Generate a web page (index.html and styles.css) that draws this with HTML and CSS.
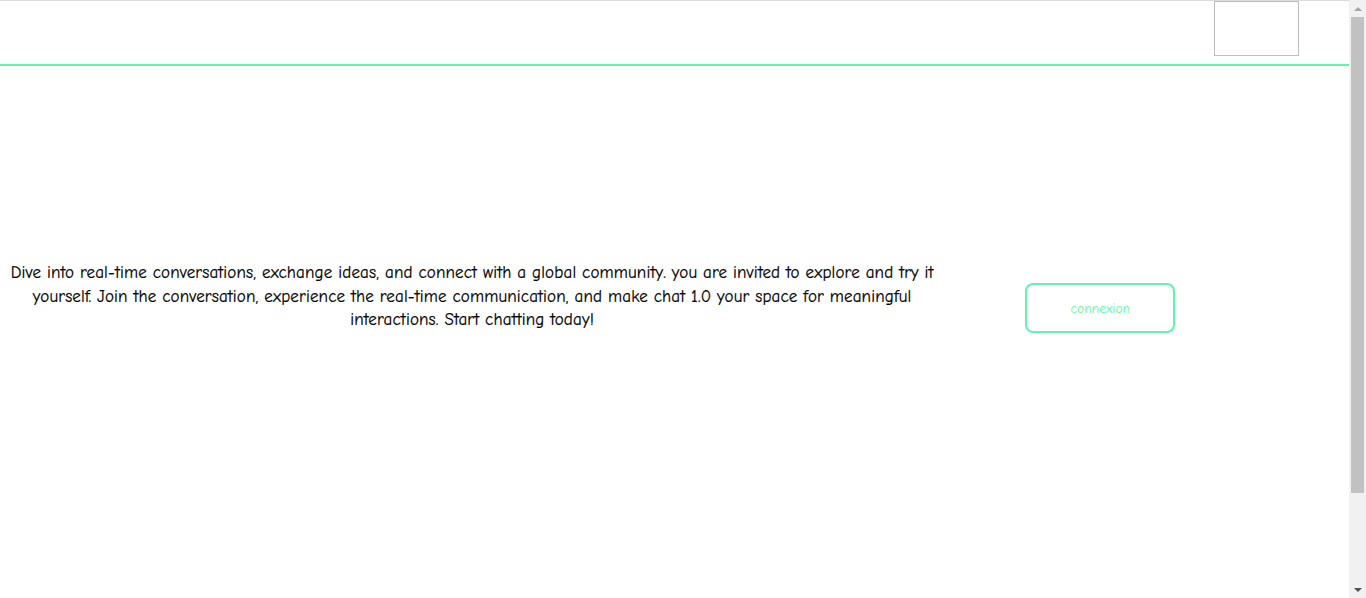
FILE: index.html
```html
<!DOCTYPE html>
<html lang="en">
<head>
<meta charset="utf-8">
<title>chat 1.0</title>
<link rel="stylesheet" href="styles.css">
</head>
<body>
<div class="page">
  <header class="topbar">
    <div class="logo-box"></div>
  </header>
  <main class="hero">
    <p class="intro">Dive into real-time conversations, exchange ideas, and connect with a global community. you are invited to explore and try it<br>yourself. Join the conversation, experience the real-time communication, and make chat 1.0 your space for meaningful<br>interactions. Start chatting today!</p>
    <div class="action">
      <button class="connect">connexion</button>
    </div>
  </main>
</div>
<div class="scrollbar" aria-hidden="true">
  <div class="sb-btn sb-up"><span class="tri-up"></span></div>
  <div class="sb-track"><div class="sb-thumb"></div></div>
  <div class="sb-btn sb-down"><span class="tri-down"></span></div>
</div>
</body>
</html>
```
FILE: styles.css
```css
html, body {
  margin: 0;
  padding: 0;
}
body {
  height: 100vh;
  overflow: hidden;
  display: flex;
  background: #ffffff;
  font-family: "Comic Sans MS", "Comic Neue", "Open Sans", sans-serif;
  color: #000;
}
.page {
  flex: 1;
  min-width: 0;
}
.topbar {
  height: 66px;
  border-top: 1px solid #dcdcdc;
  border-bottom: 2px solid #60f5aa;
  display: flex;
  justify-content: flex-end;
  align-items: flex-start;
  padding-right: 50px;
  box-sizing: border-box;
}
.logo-box {
  width: 85px;
  height: 55px;
  border: 1px solid #bdbdbd;
  box-sizing: border-box;
}
.hero {
  display: flex;
  align-items: flex-start;
  padding-top: 195px;
}
.intro {
  width: 70%;
  margin: 0;
  text-align: center;
  font-size: 17px;
  letter-spacing: 0.15px;
  line-height: 23.5px;
  -webkit-text-stroke: 0.2px #000;
}
.action {
  flex: 1;
  padding-top: 22px;
  padding-left: 81px;
}
.connect {
  width: 150px;
  height: 50px;
  background: #fff;
  border: 2px solid #60f5aa;
  border-radius: 8px;
  color: #5cf59c;
  font-family: "Comic Sans MS", "Comic Neue", "Open Sans", sans-serif;
  font-size: 13.5px;
  padding: 0;
}
.scrollbar {
  width: 17px;
  flex: none;
  background: #f1f1f1;
  display: flex;
  flex-direction: column;
}
.sb-btn {
  height: 17px;
  display: flex;
  align-items: center;
  justify-content: center;
  flex: none;
}
.tri-up {
  width: 0;
  height: 0;
  border-left: 4px solid transparent;
  border-right: 4px solid transparent;
  border-bottom: 4px solid #a3a3a3;
}
.tri-down {
  width: 0;
  height: 0;
  border-left: 4px solid transparent;
  border-right: 4px solid transparent;
  border-top: 4px solid #505050;
}
.sb-track {
  flex: 1;
  padding: 0 2px;
}
.sb-thumb {
  height: 476px;
  background: #c1c1c1;
}
```
